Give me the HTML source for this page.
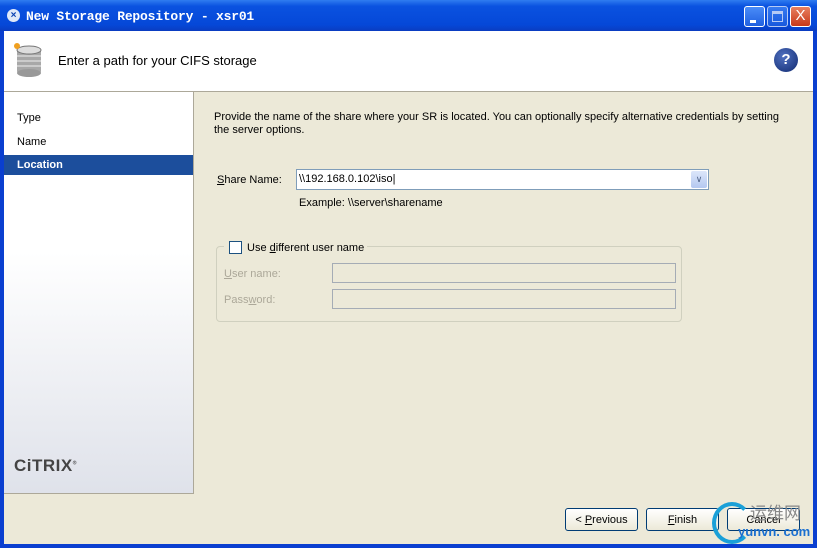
<!DOCTYPE html>
<html><head><style>
*{margin:0;padding:0;box-sizing:border-box}
body{width:817px;height:548px;overflow:hidden;background:#0a3fd0;font-family:"Liberation Sans",sans-serif;font-size:11px;position:relative}
.tb{position:absolute;left:0;top:0;width:817px;height:31px;background:linear-gradient(#2f7cf0,#0a52e0 20%,#0548d8 80%,#0a3cc0);}
.tt{position:absolute;left:26px;top:9px;color:#fff;font-family:"Liberation Mono",monospace;font-weight:bold;font-size:13px;letter-spacing:-.2px}
.wb{position:absolute;top:6px;width:21px;height:21px;border:1px solid #fff;border-radius:3px;background:linear-gradient(#4a8cf8,#2060e0)}
.cl{background:linear-gradient(#e88060,#c83818);color:#fff;font-size:15px;text-align:center;line-height:18px;font-family:"Liberation Sans",sans-serif}
.hd{position:absolute;left:4px;top:31px;width:809px;height:61px;background:#fff;border-bottom:1px solid #aca899}
.lp{position:absolute;left:4px;top:92px;width:190px;height:402px;background:linear-gradient(#fff 40%,#dfe2ea);border-right:1px solid #aca899;border-bottom:1px solid #aca899}
.rp{position:absolute;left:194px;top:92px;width:619px;height:402px;background:#ece9d8}
.bt{position:absolute;left:4px;top:494px;width:809px;height:50px;background:#ece9d8}
.nav{position:absolute;left:13px;font-size:11px;color:#000}
.btn{position:absolute;top:508px;height:23px;width:73px;border:1px solid #003c74;border-radius:3px;background:linear-gradient(#fff,#ece9d8);text-align:center;line-height:23px;font-size:11px}
.in{position:absolute;background:#ece9d8;border:1px solid #a5acb5}
</style></head><body>
<div class="tb"></div>
<div style="position:absolute;left:7px;top:9px;width:13px;height:13px;border-radius:50%;background:#dfe8f8;color:#0840b0;font-size:10px;font-weight:bold;text-align:center;line-height:13px">×</div>
<div class="tt">New Storage Repository - xsr01</div>
<div class="wb" style="left:744px"><div style="position:absolute;left:5px;top:13px;width:6px;height:3px;background:#fff"></div></div>
<div class="wb" style="left:767px;opacity:.7"><div style="position:absolute;left:4px;top:4px;width:11px;height:11px;border:1px solid #fff;border-top-width:3px"></div></div>
<div class="wb cl" style="left:790px">X</div>
<div class="hd">
 <svg style="position:absolute;left:8px;top:11px" width="34" height="36"><rect x="5" y="6" width="24" height="26" rx="3" fill="#a8a8a8"/><ellipse cx="17" cy="8" rx="12" ry="4" fill="#ddd" stroke="#777"/><path d="M5 14h24M5 19h24M5 24h24" stroke="#eee"/><ellipse cx="17" cy="31" rx="12" ry="4" fill="#999"/><circle cx="5" cy="4" r="3" fill="#f0a020"/></svg>
 <div style="position:absolute;left:54px;top:22px;font-size:13px">Enter a path for your CIFS storage</div>
 <div style="position:absolute;left:770px;top:17px;width:24px;height:24px;border-radius:50%;background:radial-gradient(circle at 40% 35%,#5070c0,#102a70);color:#fff;font-weight:bold;font-size:15px;text-align:center;line-height:24px">?</div>
</div>
<div class="lp">
 <div class="nav" style="top:20px">Type</div>
 <div class="nav" style="top:44px">Name</div>
 <div style="position:absolute;left:0;top:63px;width:189px;height:20px;background:#1c4e9c"></div>
 <div class="nav" style="top:67px;color:#fff;font-weight:bold">Location</div>
 <div style="position:absolute;left:10px;top:364px;font-weight:900;font-size:17px;color:#444;letter-spacing:.5px">CiTRIX<sup style="font-size:5px">®</sup></div>
</div>
<div class="rp">
 <div style="position:absolute;left:20px;top:19px;width:570px;line-height:13px">Provide the name of the share where your SR is located. You can optionally specify alternative credentials by setting the server options.</div>
 <div style="position:absolute;left:23px;top:82px"><u>S</u>hare Name:</div>
 <div style="position:absolute;left:102px;top:77px;width:413px;height:21px;background:#fff;border:1px solid #7f9db9;padding:3px 2px">\\192.168.0.102\iso|
  <div style="position:absolute;right:1px;top:1px;width:16px;height:17px;background:linear-gradient(#dce6fa,#b4c8f0);border-radius:2px;color:#4d6185;font-size:9px;text-align:center;line-height:17px">&#8744;</div></div>
 <div style="position:absolute;left:105px;top:105px">Example: \\server\sharename</div>
 <div style="position:absolute;left:22px;top:154px;width:466px;height:76px;border:1px solid #d0d0bf;border-radius:4px"></div>
 <div style="position:absolute;left:30px;top:147px;background:#ece9d8;height:16px;width:143px"></div>
 <div style="position:absolute;left:35px;top:149px;width:13px;height:13px;border:1px solid #1c5180;background:#fff"></div>
 <div style="position:absolute;left:53px;top:150px">Use <u>d</u>ifferent user name</div>
 <div style="position:absolute;left:30px;top:176px;color:#aca899"><u>U</u>ser name:</div>
 <div style="position:absolute;left:30px;top:202px;color:#aca899">Pass<u>w</u>ord:</div>
 <div class="in" style="left:138px;top:171px;width:344px;height:20px"></div>
 <div class="in" style="left:138px;top:197px;width:344px;height:20px"></div>
</div>
<div class="bt"></div>
<div class="btn" style="left:565px">&lt; <u>P</u>revious</div>
<div class="btn" style="left:646px"><u>F</u>inish</div>
<div class="btn" style="left:727px">Cancel</div>
<div style="position:absolute;left:712px;top:502px;width:40px;height:42px;border:4px solid #1aa0d8;border-right-color:transparent;border-radius:50%"></div>
<div style="position:absolute;left:750px;top:499px;font-size:17px;color:#888;font-family:'Noto Sans CJK SC',sans-serif">运维网</div>
<div style="position:absolute;left:738px;top:524px;font-size:13px;color:#1a6fd0;font-weight:bold">yunvn. com</div>
</body></html>
